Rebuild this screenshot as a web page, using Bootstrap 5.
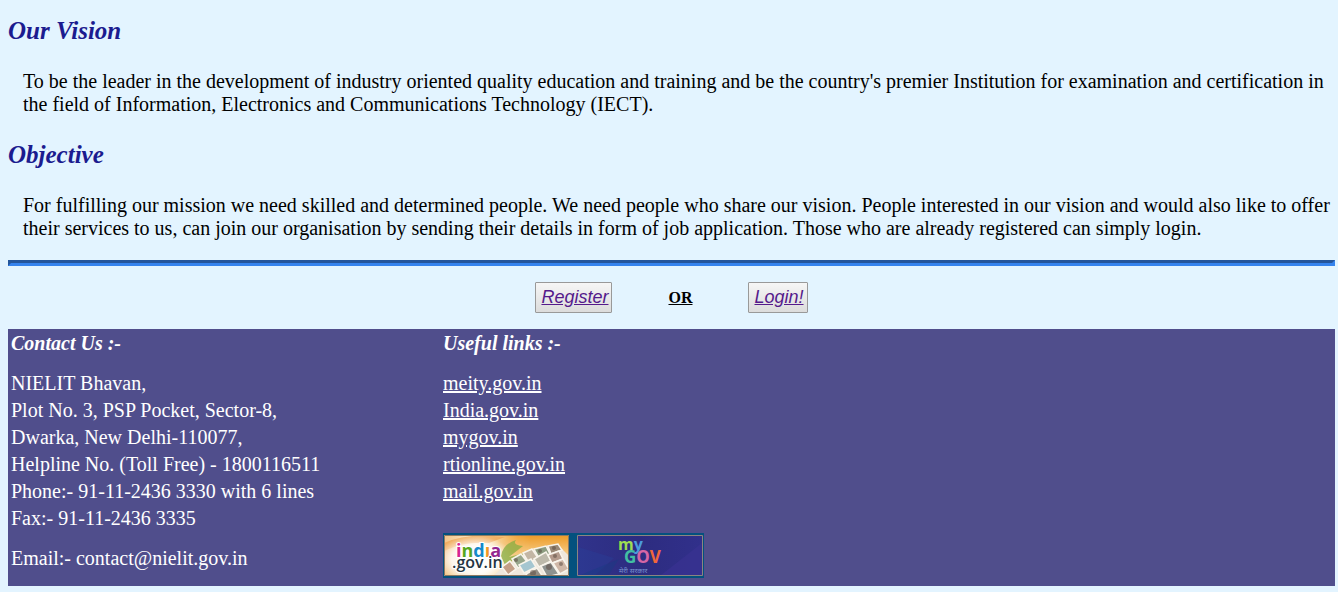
<!DOCTYPE html>
<html lang="en">
<head>
<meta charset="utf-8">
<meta name="viewport" content="width=device-width, initial-scale=1">
<title>NIELIT Recruitment</title>
<link href="https://cdn.jsdelivr.net/npm/bootstrap@5.3.0/dist/css/bootstrap.min.css" rel="stylesheet">
<style>
body { background: #e3f4ff; color: #000; font: 20px/23px "Liberation Serif", "Times New Roman", serif; padding: 16px 3px 6px 8px; }
.topic { color: #1b1b8f; font-size: 25px; line-height: 30px; font-weight: 700; font-style: italic; margin: 0 0 24px; }
.statement { margin: 0 0 24px 15px; }
.statement.closing { margin-bottom: 20px; }
.divider { border: 3px solid; border-color: #24559b #3583ee #3583ee #24559b; opacity: 1; margin: 0 0 16px; height: 6px; }
.entry { height: 31px; padding: 0 3px 0 5px; border: 1px solid #999; border-radius: 1px; background: linear-gradient(#f6f6f6, #dcdcdc); color: #551a8b; font: italic 18px/27px "Liberation Sans", Arial, sans-serif; text-decoration: underline; }
.choices { gap: 56px; margin-bottom: 16px; }
.either { font-size: 16px; }
.site-foot { background: #504e8c; color: #fff; padding: 3px 3px 8px; }
.foot-title { font-size: 20px; line-height: 23px; font-weight: 700; font-style: italic; margin: 0 0 15px; }
.contact { flex: 0 1 432px; }
.foot-lines { line-height: 27px; }
.foot-lines p { margin: 0 0 13px; }
.foot-lines a { color: #fff; }
.partners { background: #04517e; gap: 8px; padding: 2px 1px; width: 261px; margin-top: 28px; }
.partners svg { display: block; }
</style>
</head>
<body>
<main>
<h2 class="topic">Our Vision</h2>
<p class="statement">To be the leader in the development of industry oriented quality education and training and be the country's premier Institution for examination and certification in the field of Information, Electronics and Communications Technology (IECT).</p>
<h2 class="topic">Objective</h2>
<p class="statement closing">For fulfilling our mission we need skilled and determined people. We need people who share our vision. People interested in our vision and would also like to offer their services to us, can join our organisation by sending their details in form of job application. Those who are already registered can simply login.</p>
<hr class="divider">
<div class="choices d-flex justify-content-center align-items-center">
<button type="button" class="entry">Register</button>
<b class="either text-decoration-underline">OR</b>
<button type="button" class="entry">Login!</button>
</div>
</main>
<footer class="site-foot d-flex flex-wrap">
<section class="contact">
<h3 class="foot-title">Contact Us :-</h3>
<div class="foot-lines">
<p>NIELIT Bhavan,<br>Plot No. 3, PSP Pocket, Sector-8,<br>Dwarka, New Delhi-110077,<br>Helpline No. (Toll Free) - 1800116511<br>Phone:- 91-11-2436 3330 with 6 lines<br>Fax:- 91-11-2436 3335</p>
<p class="mb-0">Email:- contact@nielit.gov.in</p>
</div>
</section>
<section>
<h3 class="foot-title">Useful links :-</h3>
<ul class="foot-lines list-unstyled mb-0">
<li><a href="#meity">meity.gov.in</a></li>
<li><a href="#india">India.gov.in</a></li>
<li><a href="#mygov">mygov.in</a></li>
<li><a href="#rti">rtionline.gov.in</a></li>
<li><a href="#mail">mail.gov.in</a></li>
</ul>
<div class="partners d-flex">
<a href="#india" aria-label="india.gov.in">
<svg width="125" height="41" viewBox="0 1 125 41">
<defs>
<linearGradient id="dawn" x2="1"><stop stop-color="#f3c58a"/><stop offset=".3" stop-color="#fff3d8"/><stop offset=".6" stop-color="#f4c070"/><stop offset="1" stop-color="#e8dfc8"/></linearGradient>
<linearGradient id="glow" x2="0" y2="1"><stop stop-color="#ee9820"/><stop offset=".6" stop-color="#f7d9a0"/><stop offset="1" stop-color="#e8e2cf"/></linearGradient>
<linearGradient id="blend"><stop stop-color="#fff" stop-opacity="0"/><stop offset=".5" stop-color="#fff"/></linearGradient>
<mask id="fade"><path d="M45 0h81v43H45z" fill="url(#blend)"/></mask>
<radialGradient id="halo"><stop stop-color="#fff"/><stop offset=".6" stop-color="#fff" stop-opacity=".8"/><stop offset="1" stop-color="#fff" stop-opacity="0"/></radialGradient>
</defs>
<rect width="126" height="43" fill="url(#dawn)"/>
<path d="M45 0h81v43H45z" fill="url(#glow)" mask="url(#fade)"/>
<path d="M0 9Q24-2 61 3L45 9Q20 7 0 17z" fill="#efa653" opacity=".75"/>
<ellipse cx="31" cy="25" rx="39" ry="23" fill="url(#halo)"/>
<path d="M57 22Q59 10 72 6Q68 11 79 12L65 23L84 18L61 31z" fill="#8cae43" opacity=".8"/>
<path d="M48 43Q75 17 113 10L126 23V43z" fill="#eee7dc"/>
<g stroke="#f8f4eb" stroke-width="1.5">
<path d="M68 25l9-5 7 9-10 5z" fill="#97a68b"/><path d="M79 19l9-4 6 9-9 5z" fill="#c3b6a4"/><path d="M90 15l12-3 4 8-11 4z" fill="#8d9c80"/><path d="M104 12l10-2 4 6-11 4z" fill="#9b8976"/>
<path d="M58 33l8-6 6 8-8 6z" fill="#c39e86"/><path d="M75 31l12-6 5 8-12 6z" fill="#a5c6d0"/><path d="M90 25l12-7 5 9-12 6z" fill="#bdb9aa"/><path d="M104 21l11-4 4 8-11 4z" fill="#b49b8c"/>
<path d="M82 40l11-6 6 9H84z" fill="#948f86"/><path d="M97 32l10-4 8 12-12 3z" fill="#8e928f"/><path d="M109 29l10-4 6 10-9 5z" fill="#cfb7a6"/>
</g>
<g fill="#5d4d43" opacity=".55"><circle cx="72" cy="26" r="2"/><circle cx="96" cy="17" r="2"/><circle cx="110" cy="14" r="2"/><circle cx="111" cy="22" r="2"/><circle cx="105" cy="33" r="3"/><circle cx="117" cy="30" r="2"/><circle cx="89" cy="39" r="3"/></g>
<g font-family="Open Sans, sans-serif" stroke="#fff" stroke-width="2" paint-order="stroke">
<text x="12" y="23" font-weight="700" font-size="18"><tspan fill="#d72491">i</tspan><tspan fill="#57a721">n</tspan><tspan fill="#1689ca">d</tspan><tspan fill="#f49824">ı</tspan><tspan fill="#93278f">a</tspan></text>
<text x="8" y="34" fill="#253541" font-weight="600" font-size="16">.gov.in</text>
</g>
<path d="M.5 1.5h124v40H.5z" fill="none" stroke="#8e7a61"/>
</svg>
</a>
<a href="#mygov" aria-label="myGov">
<svg width="126" height="41" viewBox="0 1 126 41">
<defs><linearGradient id="night" x2="1"><stop stop-color="#30338b"/><stop offset=".5" stop-color="#2d2c80"/><stop offset="1" stop-color="#31308b"/></linearGradient></defs>
<rect width="126" height="43" fill="url(#night)"/>
<path d="M1 13L37 24L17 42H1z" fill="#29439b" opacity=".35"/><path d="M1 42L42 25L31 42z" fill="#173b83" opacity=".4"/><path d="M83 42L125 9V42z" fill="#393291" opacity=".7"/>
<g font-family="Open Sans, sans-serif" font-weight="700">
<text x="41" y="16" font-size="16"><tspan fill="#9dde52">m</tspan><tspan fill="#4b9bdc">y</tspan></text>
<text x="47" y="29" font-size="17"><tspan fill="#42bea3">G</tspan><tspan fill="#d566a6">O</tspan><tspan fill="#f1663b">V</tspan></text>
</g>
<text x="42" y="39" font-family="Noto Sans, sans-serif" font-size="7" fill="#7892cf">मेरी सरकार</text>
<path d="M.5 1.5h125v40H.5z" fill="none" stroke="#8b8580"/>
</svg>
</a>
</div>
</section>
</footer>
<script src="https://cdn.jsdelivr.net/npm/bootstrap@5.3.0/dist/js/bootstrap.bundle.min.js"></script>
</body>
</html>
